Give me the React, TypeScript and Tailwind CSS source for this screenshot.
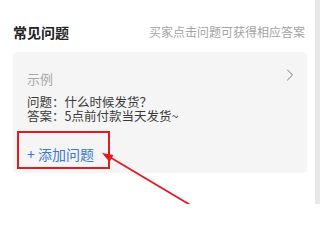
import { ChevronRight } from 'lucide-react';

const cjk = { fontFamily: '"Noto Sans CJK SC", "Noto Sans", sans-serif' };

export default function App() {
  return (
    <div className="relative flex h-[204px] w-[320px] overflow-hidden bg-white" style={cjk}>
      <div className="flex-1 pl-[13px] pr-[8px]">
        <div className="mt-[22px] flex h-[20px] items-center justify-between">
          <span className="text-[14px] font-bold leading-[20px] text-[#222]">常见问题</span>
          <span className="pr-[2px] text-[12px] leading-[20px] text-[#a3a3a3]">买家点击问题可获得相应答案</span>
        </div>

        <div className="mt-[10px] h-[121px] rounded-[4px] bg-[#f5f5f5] px-[14px] pt-[19px]">
          <div className="flex h-[16px] items-center justify-between">
            <span className="text-[13px] leading-[16px] text-[#a8a8a8]">示例</span>
            <ChevronRight className="-mr-[7px] mb-[8px] h-[20px] w-[20px] text-[#777]" strokeWidth={1.2} />
          </div>
          <p className="mt-[8px] text-[12.5px] leading-[14px] text-[#3a3a3a]">问题：什么时候发货？</p>
          <p className="text-[12.5px] leading-[14px] text-[#3a3a3a]">答案：5点前付款当天发货~</p>
          <div className="relative mt-[18px] inline-block">
            <span className="text-[14px] leading-[20px] text-[#3b78d0]">+ 添加问题</span>
            <div className="absolute -left-[10px] -top-[10px] h-[38px] w-[93px] border-2 border-[#e01b22]" />
          </div>
        </div>
      </div>
      <div className="w-[5px] bg-[#e8e8e8]" />

      <svg className="pointer-events-none absolute left-0 top-0" width="320" height="204" viewBox="0 0 320 204">
        <line x1="192" y1="206" x2="108" y2="156" stroke="#e01b22" strokeWidth="1.8" />
        <polygon points="102,153 113.5,155 109.5,162" fill="#e01b22" />
      </svg>
    </div>
  );
}
